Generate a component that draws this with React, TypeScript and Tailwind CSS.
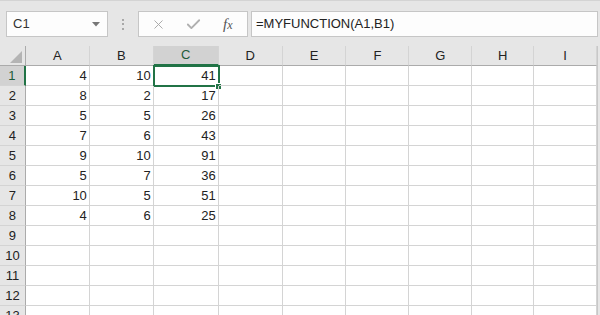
import { X, Check } from 'lucide-react'

const cols = [
  { l: 'A', w: 'w-[64px]' },
  { l: 'B', w: 'w-[64px]' },
  { l: 'C', w: 'w-[65px]' },
  { l: 'D', w: 'w-[64px]' },
  { l: 'E', w: 'w-[64px]' },
  { l: 'F', w: 'w-[63px]' },
  { l: 'G', w: 'w-[63px]' },
  { l: 'H', w: 'w-[62px]' },
  { l: 'I', w: 'w-[63px]' },
]

const data: (number | null)[][] = [
  [4, 10, 41],
  [8, 2, 17],
  [5, 5, 26],
  [7, 6, 43],
  [9, 10, 91],
  [5, 7, 36],
  [10, 5, 51],
  [4, 6, 25],
]

export default function App() {
  const rows = Array.from({ length: 13 }, (_, i) => i + 1)

  return (
    <div className="w-[600px] h-[315px] overflow-hidden bg-[#e6e6e6] font-['Liberation_Sans',sans-serif] text-[13px] text-[#222]">
      {/* Formula bar */}
      <div className="h-[46px] border-t border-[#d4d4d4] flex items-start pt-[10px]">
        <div className="ml-[6px] w-[102px] h-[26px] border border-[#c6c6c6] bg-[#fdfdfd] flex items-center justify-between pl-[6px] pr-[7px]">
          <span className="text-[#333]">C1</span>
          <svg width="8" height="5" viewBox="0 0 8 5">
            <path d="M0 0 L8 0 L4 4.5 Z" fill="#777" />
          </svg>
        </div>
        <div className="ml-[14px] h-[26px] flex flex-col justify-center gap-[2.5px]">
          <div className="w-[2px] h-[2px] bg-[#a8a8a8]" />
          <div className="w-[2px] h-[2px] bg-[#a8a8a8]" />
          <div className="w-[2px] h-[2px] bg-[#a8a8a8]" />
        </div>
        <div className="ml-[14px] w-[110px] h-[26px] border border-[#c6c6c6] bg-[#fdfdfd] flex items-center pl-[12px]">
          <X className="w-[15px] h-[15px] text-[#a6a6a6]" strokeWidth={1.5} />
          <Check className="ml-[19px] w-[17px] h-[17px] text-[#b0b0b0]" strokeWidth={2.6} />
          <span className="ml-[21px] font-['Liberation_Serif',serif] italic text-[15px] text-[#555] leading-none">
            f<span className="text-[12px]">x</span>
          </span>
        </div>
        <div className="ml-[3px] w-[347px] h-[26px] border border-[#c6c6c6] bg-[#fdfdfd] flex items-center pl-[4px]">
          <span className="text-[#222]">=MYFUNCTION(A1,B1)</span>
        </div>
      </div>

      {/* Sheet */}
      <div className="w-[598px] border-r border-[#c8c8c8] bg-white">
        {/* Column headers */}
        <div className="flex h-[20px] bg-[#e6e6e6]">
          <div className="w-[26px] h-[20px] border-r border-b border-[#ababab] flex items-end justify-end pr-[3px] pb-[2px]">
            <svg width="12" height="12" viewBox="0 0 12 12">
              <path d="M12 0 L12 12 L0 12 Z" fill="#b4b4b4" />
            </svg>
          </div>
          {cols.map((c) =>
            c.l === 'C' ? (
              <div
                key={c.l}
                className={`${c.w} h-[20px] bg-[#d2d2d2] border-r border-[#d4d4d4] border-b-2 border-b-[#217346] flex items-center justify-center text-[#1e5c3a]`}
              >
                {c.l}
              </div>
            ) : (
              <div
                key={c.l}
                className={`${c.w} h-[20px] border-r border-[#d4d4d4] border-b border-b-[#ababab] flex items-center justify-center`}
              >
                {c.l}
              </div>
            )
          )}
        </div>

        {/* Rows */}
        {rows.map((r) => (
          <div key={r} className="flex h-[20px]">
            {r === 1 ? (
              <div className="w-[26px] h-[20px] bg-[#d2d2d2] border-r-2 border-[#217346] border-b border-b-[#d4d4d4] flex items-center justify-center text-[#1e5c3a]">
                {r}
              </div>
            ) : (
              <div className="w-[26px] h-[20px] bg-[#e6e6e6] border-r border-[#ababab] border-b border-b-[#d4d4d4] flex items-center justify-center">
                {r}
              </div>
            )}
            {cols.map((c, ci) => {
              const v = data[r - 1]?.[ci]
              return (
                <div
                  key={c.l}
                  className={`${c.w} h-[20px] border-r border-b border-[#d4d4d4] flex items-center justify-end pr-[2px] relative`}
                >
                  {v != null ? v : ''}
                  {r === 1 && c.l === 'C' && (
                    <div className="absolute -left-[1px] -top-[1px] w-[67px] h-[22px] border-2 border-[#217346]">
                      <div className="absolute left-[60px] top-[16px] w-[7px] h-[7px] bg-[#217346] border border-white" />
                    </div>
                  )}
                </div>
              )
            })}
          </div>
        ))}
      </div>
    </div>
  )
}
